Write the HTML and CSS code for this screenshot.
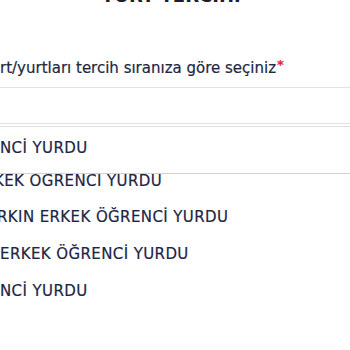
FILE: index.html
```html
<!DOCTYPE html>
<html lang="tr">
<head>
    <meta charset="UTF-8">
    <meta name="viewport" content="width=device-width, initial-scale=1.0">
    <title>Yurt Tercihi</title>
    <link rel="stylesheet" href="styles.css">
</head>
<body>
    <div class="page">
        <h2 class="title">YURT TERCİHİ</h2>

        <div class="field">
            <label class="field-label">rt/yurtları tercih sıranıza göre seçiniz<span class="req">*</span></label>
            <div class="select-box"></div>

            <div class="dropdown">
                <div class="option selected">NCİ YURDU</div>
                <ul class="options">
                    <li class="option">KEK OGRENCI YURDU</li>
                    <li class="option">RKIN ERKEK ÖĞRENCİ YURDU</li>
                    <li class="option">ERKEK ÖĞRENCİ YURDU</li>
                    <li class="option">NCİ YURDU</li>
                </ul>
            </div>
        </div>
    </div>
</body>
</html>
```

FILE: styles.css
```css
body {
    margin: 0;
    font-family: "DejaVu Sans", sans-serif;
    color: #1d2545;
    background-color: #fff;
    overflow: hidden;
}
.page {
    margin-top: -15px;
}
.title {
    margin: 0;
    padding-right: 8px;
    font-size: 18px;
    line-height: 22px;
    font-weight: bold;
    text-align: center;
    color: #1b1d2b;
}
.field {
    margin: 48px -12px 0;
    -webkit-text-stroke: 0.2px currentColor;
}
.field-label {
    display: block;
    padding-left: 12px;
    font-size: 15px;
    line-height: 20px;
    white-space: nowrap;
    color: #232842;
}
.req {
    margin-left: 1px;
    color: #e3263b;
    font-size: 13px;
    font-weight: bold;
    vertical-align: 4px;
}
.select-box {
    margin-top: 9px;
    height: 37px;
    box-sizing: border-box;
    border: 1px solid #e3e3e3;
}
.dropdown {
    margin-top: 2px;
    border-top: 1px solid #dedede;
}
.option {
    padding-left: 12px;
    font-size: 15px;
    letter-spacing: 0.4px;
    white-space: nowrap;
}
.selected {
    padding-top: 8px;
    padding-bottom: 12px;
    line-height: 26px;
    border-bottom: 1px solid #d2d2d2;
}
/* list is scrolled a little */
.options {
    list-style: none;
    margin: 0;
    padding: 0;
    height: 180px;
    overflow: hidden;
}
.options .option {
    line-height: 36.7px;
}
.options .option:first-child {
    margin-top: -11.5px;
    text-indent: -6px;
}
.options .option:nth-child(2) {
    text-indent: -3px;
}
```
